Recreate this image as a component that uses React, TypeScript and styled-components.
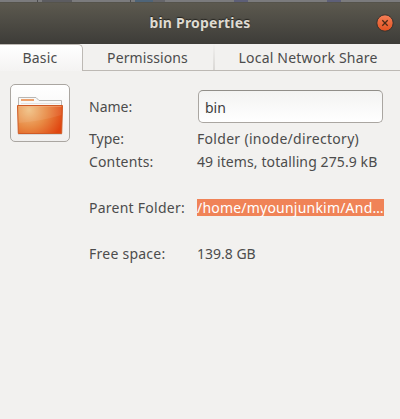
import React from 'react';
import styled, { createGlobalStyle } from 'styled-components';

const GlobalStyle = createGlobalStyle`
  * { box-sizing: border-box; }
  html, body { margin: 0; padding: 0; background: #f2f1ef; overflow: hidden; }
`;

const Dialog = styled.main`
  width: 400px;
  height: 419px;
  display: flex;
  flex-direction: column;
  background: #f2f1ef;
  color: #4c4c4c;
  font: 14px/18px "Noto Sans", "Open Sans", sans-serif;
`;

const Backdrop = styled.div`
  flex: none;
  height: 2px;
  background: linear-gradient(90deg, #7b7b7d 0 37px, #4b4b4d 37px 38px, #7b7b7d 38px 42px, #5c5c60 42px 72px, #7b7b7d 72px 130px, #4b4b4d 130px 131px, #7b7b7d 131px 135px, #4e6478 135px 153px, #66666a 153px 165px, #7b7b7d 165px 234px, #5d5f78 234px 248px, #7b7b7d 248px 327px, #5d5f78 327px 341px, #7b7b7d 341px);
`;

const TitleBar = styled.header`
  flex: none;
  height: 42px;
  display: grid;
  grid-template-columns: 32px 1fr 32px;
  align-items: center;
  padding-bottom: 1px;
  background: linear-gradient(#5c594f, #3d3c38);
  border-top: 1px solid #55534b;
`;

const Title = styled.h1`
  grid-column: 2;
  margin: 0;
  text-align: center;
  font-size: 14px;
  line-height: 18px;
  font-weight: 700;
  letter-spacing: 0.2px;
  color: #dfdbd2;
  text-shadow: 0 -1px 1px #24231f;
`;

const CloseButton = styled.button`
  width: 18px;
  height: 18px;
  padding: 0;
  margin-left: 8px;
  border: 0;
  background: none;
  svg { display: block; }
`;

const Tabs = styled.nav`
  flex: none;
  display: flex;
  height: 27px;
  border-bottom: 1px solid #bdb9b4;
`;

const Tab = styled.button<{ $width: number; $active?: boolean; $last?: boolean; $tracking: number }>`
  width: ${p => p.$width}px;
  height: ${p => (p.$active ? 27 : 26)}px;
  padding: ${p => (p.$active ? '0 2px 0 0' : p.$last ? '2px 0 0 1px' : '2px 1px 0 0')};
  font: inherit;
  color: inherit;
  letter-spacing: ${p => p.$tracking}px;
  white-space: nowrap;
  border: 0 solid #bdb9b4;
  border-width: ${p => (p.$active ? '1px 1px 0 0' : p.$last ? '0' : '0 2px 0 0')};
  border-radius: ${p => (p.$active ? '0 5px 0 0' : '0')};
  background: ${p => (p.$active ? 'linear-gradient(#ffffff, #f4f3f2)' : 'none')};
  ${p => !p.$active && !p.$last && 'border-image: linear-gradient(#f2f1ef, #d9d7d4) 1;'}
`;

const Content = styled.section`
  display: flex;
  align-items: flex-start;
  padding: 13px 16px 0 10px;
`;

const IconButton = styled.button`
  flex: none;
  width: 60px;
  height: 58px;
  padding: 0;
  border: 1px solid #aaa6a1;
  border-radius: 5px;
  background: linear-gradient(#ffffff, #f0efee);
  svg { display: block; }
`;

const Fields = styled.dl`
  margin: 6px 0 0 19px;
  width: 295px;
  display: grid;
  grid-template-columns: 108px 187px;
  grid-template-rows: 35px 18px 18px 18px 18px 18px 18px;
  row-gap: 5px;
  align-items: start;
  white-space: nowrap;
`;

const Label = styled.dt<{ $row: number; $tracking: number }>`
  grid-row: ${p => p.$row};
  grid-column: 1;
  padding-top: ${p => (p.$row === 1 ? 8 : 0)}px;
  letter-spacing: ${p => p.$tracking}px;
`;

const Value = styled.dd<{ $row: number; $tracking: number; $selected?: boolean }>`
  grid-row: ${p => p.$row};
  grid-column: 2;
  justify-self: stretch;
  margin: 0;
  height: ${p => (p.$selected ? 17 : 18)}px;
  letter-spacing: ${p => p.$tracking}px;
  ${p => p.$selected && 'background: #f08357; color: #fff;'}
`;

const NameCell = styled.dd`
  grid-row: 1;
  grid-column: 2;
  margin: 0 0 0 1px;
`;

const NameInput = styled.input`
  display: block;
  width: 185px;
  height: 33px;
  padding: 1px 6px 0;
  font: inherit;
  color: #3c3c3c;
  border: 1px solid #aaa6a1;
  border-top-color: #918e89;
  border-radius: 5px;
  background: linear-gradient(#f3f3f2, #ffffff);
  outline: 0;
`;

const CloseIcon = () => (
  <svg width="18" height="18" viewBox="0 0 18 18">
    <defs>
      <linearGradient id="close" x2="0" y2="1">
        <stop stopColor="#f58058" />
        <stop offset="1" stopColor="#e2511f" />
      </linearGradient>
    </defs>
    <circle cx="9" cy="9" r="8.2" fill="url(#close)" stroke="#34322e" strokeWidth="1" />
    <path d="M6.3 6.3l5.4 5.4M11.7 6.3l-5.4 5.4" stroke="#4a2a16" strokeWidth="1.3" />
  </svg>
);

const FolderIcon = () => (
  <svg width="58" height="56" viewBox="11 85 58 56">
    <defs>
      <radialGradient id="folder" gradientUnits="userSpaceOnUse" cx="29" cy="110" r="36">
        <stop stopColor="#f0c184" />
        <stop offset=".5" stopColor="#e88943" />
        <stop offset="1" stopColor="#e04510" />
      </radialGradient>
    </defs>
    <path d="M18 134.5h44" stroke="#000" strokeOpacity=".1" />
    <path d="M18.5 106V97.5H36l3 3h22.5v6" fill="#f8f8f7" stroke="#b8b6b3" />
    <path d="M21 100h13" stroke="#eea36f" strokeWidth="2" />
    <path d="M21 103.5h39" stroke="#e5e3e1" />
    <path d="M17.5 105.5h45l-.8 28H18.3z" fill="url(#folder)" stroke="#cf5a25" />
    <path d="M18.5 106.5h43v8.5Q42 121 18.7 123z" fill="#fff" fillOpacity=".08" />
    <path d="M18.5 106.5h43" stroke="#f6b58c" strokeOpacity=".5" />
  </svg>
);

export default function App() {
  return (
    <>
      <GlobalStyle />
      <Dialog>
        <Backdrop />
        <TitleBar>
          <Title>bin Properties</Title>
          <CloseButton aria-label="Close"><CloseIcon /></CloseButton>
        </TitleBar>
        <Tabs>
          <Tab $active $width={83} $tracking={0.2}>Basic</Tab>
          <Tab $width={132} $tracking={0.1}>Permissions</Tab>
          <Tab $width={185} $tracking={0.2} $last>Local Network Share</Tab>
        </Tabs>
        <Content>
          <IconButton aria-label="Choose icon"><FolderIcon /></IconButton>
          <Fields>
            <Label $row={1} $tracking={0}>Name:</Label>
            <NameCell><NameInput defaultValue="bin" /></NameCell>
            <Label $row={2} $tracking={0}>Type:</Label>
            <Value $row={2} $tracking={0.3}>Folder (inode/directory)</Value>
            <Label $row={3} $tracking={0.15}>Contents:</Label>
            <Value $row={3} $tracking={0.1}>49 items, totalling 275.9 kB</Value>
            <Label $row={5} $tracking={0.25}>Parent Folder:</Label>
            <Value $row={5} $tracking={0.21} $selected>/home/myounjunkim/And…</Value>
            <Label $row={7} $tracking={0.25}>Free space:</Label>
            <Value $row={7} $tracking={0}>139.8 GB</Value>
          </Fields>
        </Content>
      </Dialog>
    </>
  );
}
